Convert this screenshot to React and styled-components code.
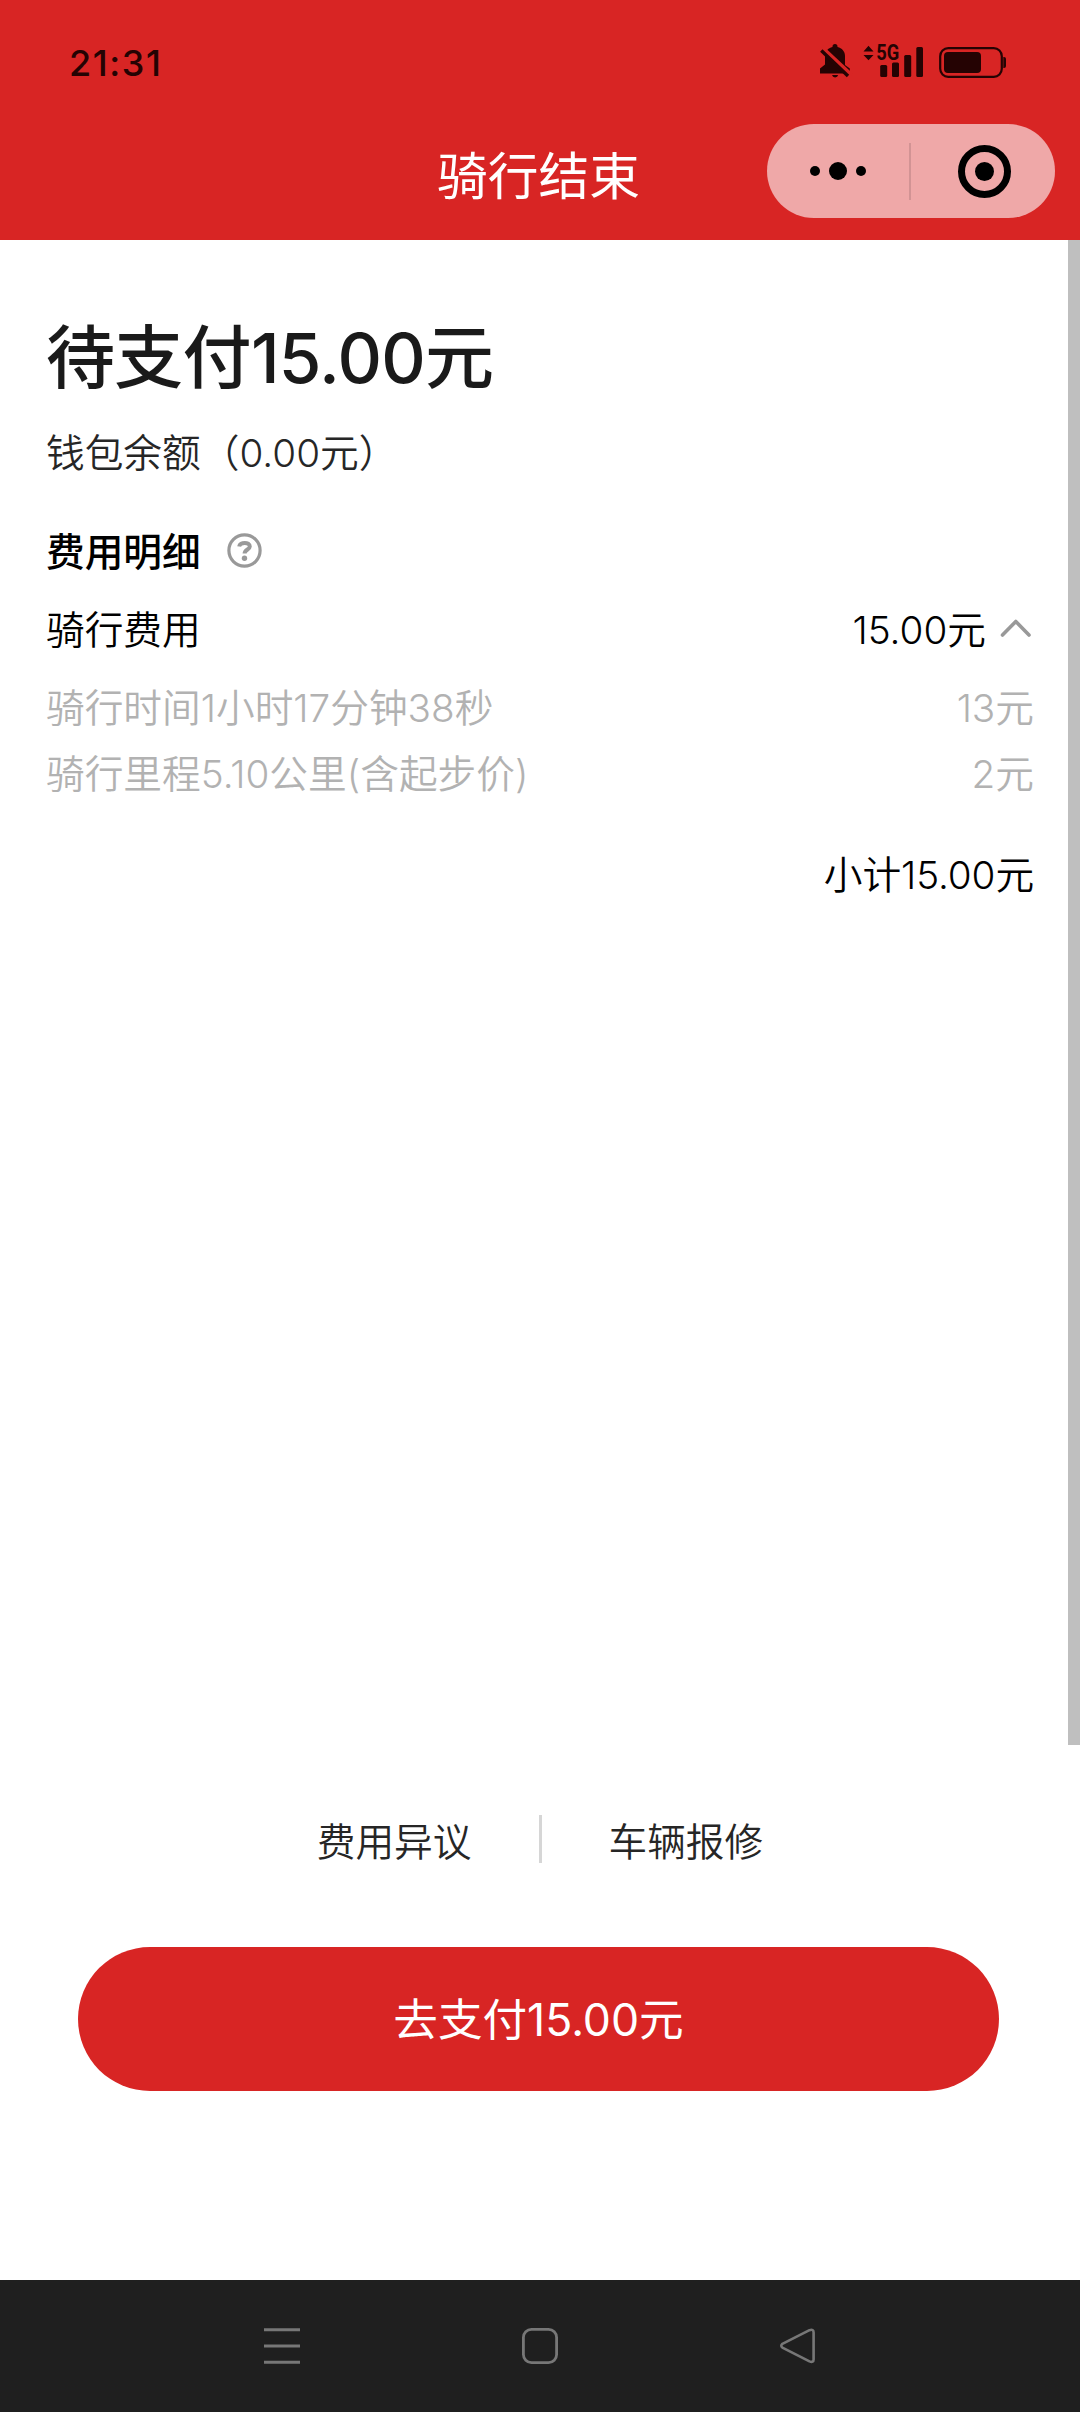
import React, { useState } from 'react';
import styled, { createGlobalStyle } from 'styled-components';

const GlobalStyle = createGlobalStyle`
  * {
    box-sizing: border-box;
  }

  body {
    margin: 0;
    background: #ffffff;
    font-family: Inter, "Noto Sans CJK SC", sans-serif;
    -webkit-font-smoothing: antialiased;
  }
`;

const Screen = styled.div`
  width: 1080px;
  height: 2412px;
  display: flex;
  flex-direction: column;
  overflow: hidden;
  background: #ffffff;
`;

const Header = styled.header`
  height: 240px;
  background: #d82524;
  display: flex;
  flex-direction: column;
`;

const StatusBar = styled.div`
  height: 124px;
  padding: 0 65px 0 69px;
  display: flex;
  justify-content: space-between;
  align-items: flex-start;
  color: #250303;
`;

const Clock = styled.span`
  margin-top: 43px;
  font-size: 36px;
  line-height: 40px;
  font-weight: 500;
  letter-spacing: 1.6px;
`;

const StatusIcons = styled.svg`
  display: block;
  width: 195px;
  height: 50px;
  margin-top: 32px;
  overflow: visible;
`;

const NavBar = styled.div`
  height: 94px;
  padding-right: 25px;
  display: grid;
  grid-template-columns: 1fr auto 1fr;
  align-items: center;
`;

const PageTitle = styled.h1`
  grid-column: 2;
  margin: 11px 0 0 22px;
  font-size: 50.7px;
  line-height: 60px;
  font-weight: 400;
  color: #ffffff;
`;

const Capsule = styled.div`
  grid-column: 3;
  justify-self: end;
  width: 288px;
  height: 94px;
  border-radius: 47px;
  background: #efa8a8;
  display: flex;
  align-items: center;
`;

const CapsuleButton = styled.button`
  flex: ${props => props.$grow};
  height: 100%;
  padding: ${props => props.$padding || '0'};
  border: none;
  background: none;
  display: flex;
  justify-content: center;
  align-items: center;

  svg {
    display: block;
  }
`;

const CapsuleDivider = styled.div`
  width: 2px;
  height: 57px;
  background: #d29394;
`;

const Body = styled.main`
  height: 1505px;
  display: flex;
`;

const Content = styled.div`
  flex: 1;
  padding: 73px 34px 0 46px;
`;

const ScrollBar = styled.div`
  width: 12px;
  background: #bfbfbf;
`;

const AmountDue = styled.h2`
  margin: 0;
  font-size: 69px;
  line-height: 90px;
  font-weight: 500;
  letter-spacing: -0.7px;
  color: #1a1a1a;
`;

const Balance = styled.p`
  margin: 25px 0 0;
  font-size: 38.7px;
  line-height: 50px;
  font-weight: 350;
  color: #262626;
`;

const SectionTitle = styled.div`
  margin-top: 49px;
  height: 50px;
  display: flex;
  align-items: center;
  gap: 26px;
  font-size: 38.7px;
  line-height: 50px;
  font-weight: 500;
  color: #000000;

  svg {
    display: block;
    margin-top: -3px;
  }
`;

const FeeRow = styled.div`
  margin-top: ${props => props.$top}px;
  height: 50px;
  display: flex;
  justify-content: space-between;
  align-items: center;
  font-size: 38.7px;
  line-height: 50px;
  font-weight: 350;
  color: ${props => (props.$muted ? '#b2b2b2' : '#000000')};
`;

const FeeAmount = styled.span`
  display: flex;
  align-items: center;
  gap: 13px;

  svg {
    display: block;
    margin: -4px 2px 0 0;
  }
`;

const Subtotal = styled.div`
  margin-top: 51px;
  text-align: right;
  font-size: 38.7px;
  line-height: 50px;
  font-weight: 350;
  letter-spacing: -0.1px;
  color: #000000;
`;

const Footer = styled.footer`
  flex: 1;
  padding-top: 70px;
  display: flex;
  flex-direction: column;
`;

const Links = styled.div`
  height: 48px;
  display: grid;
  grid-template-columns: 1fr 3px 1fr;
  grid-template-rows: 48px;
  align-items: start;
  gap: 67px;
`;

const LinkText = styled.a`
  justify-self: ${props => props.$side};
  margin-top: 3px;
  font-size: 38.7px;
  line-height: 48px;
  font-weight: 350;
  color: #262626;
`;

const LinkDivider = styled.div`
  height: 48px;
  background: #d6d6d6;
`;

const PayButton = styled.button`
  width: 921px;
  height: 144px;
  margin: 84px 0 0 78px;
  padding: 2px 0 0;
  border: none;
  border-radius: 72px;
  background: #d82524;
  color: #ffffff;
  font-family: inherit;
  font-size: 44.6px;
  line-height: 60px;
  font-weight: 370;
`;

const SystemNav = styled.nav`
  height: 132px;
  padding: 0 264px;
  background: #1f1f1f;
  display: flex;
  justify-content: space-between;
  align-items: center;

  svg {
    display: block;
  }
`;

const details = [
  { label: '骑行时间1小时17分钟38秒', value: '13元' },
  { label: '骑行里程5.10公里(含起步价)', value: '2元' },
];

function StatusGlyphs() {
  return (
    <StatusIcons viewBox="0 -10 195 50" fill="currentColor">
      {/* muted bell */}
      <path d="M12.5 5 V4.6 A2.5 2.5 0 0 1 17.5 4.6 V5 C22 6 25 9.5 25 14 V23 L29.8 26.5 V31.5 H0 V26.5 L5 22.5 V14 C5 9.5 8 6 12.5 5 Z" />
      <path d="M12 33 H18.2 A3.2 3.2 0 0 1 12 33 Z" />
      <path d="M1.5 5.5 L31.5 33.5" stroke="#d82524" strokeWidth="4.5" />
      <path d="M1.3 8.5 L28 34" stroke="currentColor" strokeWidth="3.4" />
      {/* data arrows */}
      <path d="M43.5 9.5 L48.5 3.8 L53.5 9.5 Z M43.5 13 L48.5 18.2 L53.5 13 Z" />
      <text x="56.2" y="18.4" fontFamily="Roboto, sans-serif" fontWeight="700" fontSize="21.5" textLength="23" lengthAdjust="spacingAndGlyphs">5G</text>
      {/* signal */}
      <rect x="60.2" y="23" width="7" height="12" rx="1.5" />
      <rect x="72" y="20.5" width="7" height="14.5" rx="1.5" />
      <rect x="84.2" y="13" width="7" height="22" rx="1.5" />
      <rect x="96.3" y="5" width="6.7" height="30" rx="1.5" />
      {/* battery */}
      <rect x="120.2" y="6.2" width="61.6" height="28.6" rx="8" fill="none" stroke="currentColor" strokeWidth="2.2" />
      <rect x="124" y="10" width="37" height="21" rx="4" />
      <path d="M183.3 15 H184 A2 2 0 0 1 186 17 V24 A2 2 0 0 1 184 26 H183.3 Z" />
    </StatusIcons>
  );
}

function HelpIcon() {
  return (
    <svg width="35" height="35" viewBox="0 0 35 35" fill="none" stroke="#999999">
      <circle cx="17.5" cy="17.5" r="15.6" strokeWidth="3.2" />
      <path d="M12.2 13.4 C12.8 8.8 22.8 8.6 22.8 13.5 C22.8 16.5 17.6 16.6 17.6 20.6" strokeWidth="4" />
      <circle cx="17.5" cy="25.3" r="2.7" fill="#999999" stroke="none" />
    </svg>
  );
}

function ChevronIcon({ open }) {
  return (
    <svg width="33" height="20" viewBox="0 0 33 20" fill="none" stroke="#999999" strokeWidth="3.6" strokeLinecap="round" strokeLinejoin="round">
      <path d={open ? 'M3.5 17 L16.8 3.5 L30 17' : 'M3.5 3.5 L16.8 17 L30 3.5'} />
    </svg>
  );
}

export default function App() {
  const [open, setOpen] = useState(true);

  return (
    <Screen>
      <GlobalStyle />
      <Header>
        <StatusBar>
          <Clock>21:31</Clock>
          <StatusGlyphs />
        </StatusBar>
        <NavBar>
          <PageTitle>骑行结束</PageTitle>
          <Capsule>
            <CapsuleButton $grow={143}>
              <svg width="56" height="18" viewBox="0 0 56 18">
                <circle cx="5" cy="9" r="5" />
                <circle cx="28" cy="9" r="9" />
                <circle cx="51" cy="9" r="5" />
              </svg>
            </CapsuleButton>
            <CapsuleDivider />
            <CapsuleButton $grow={142} $padding="1px 0 0 4px">
              <svg width="53" height="53" viewBox="0 0 53 53">
                <circle cx="26.5" cy="26.5" r="23" fill="none" stroke="#000000" strokeWidth="7" />
                <circle cx="26.5" cy="26.5" r="9.5" />
              </svg>
            </CapsuleButton>
          </Capsule>
        </NavBar>
      </Header>

      <Body>
        <Content>
          <AmountDue>待支付15.00元</AmountDue>
          <Balance>钱包余额（0.00元）</Balance>
          <SectionTitle>
            费用明细
            <HelpIcon />
          </SectionTitle>
          <FeeRow $top={28} onClick={() => setOpen(!open)}>
            <span>骑行费用</span>
            <FeeAmount>
              15.00元
              <ChevronIcon open={open} />
            </FeeAmount>
          </FeeRow>
          {open && details.map((item, i) => (
            <FeeRow key={item.label} $muted $top={i === 0 ? 28 : 16}>
              <span>{item.label}</span>
              <span>{item.value}</span>
            </FeeRow>
          ))}
          <Subtotal>小计15.00元</Subtotal>
        </Content>
        <ScrollBar />
      </Body>

      <Footer>
        <Links>
          <LinkText $side="end">费用异议</LinkText>
          <LinkDivider />
          <LinkText $side="start">车辆报修</LinkText>
        </Links>
        <PayButton>去支付15.00元</PayButton>
      </Footer>

      <SystemNav>
        <svg width="36" height="36" viewBox="0 0 36 36" stroke="#777777" strokeWidth="3">
          <path d="M0 1.7 H36 M0 18 H36 M0 34.3 H36" />
        </svg>
        <svg width="36" height="36" viewBox="0 0 36 36" fill="none" stroke="#777777" strokeWidth="2.8">
          <rect x="1.4" y="1.4" width="33.2" height="33.2" rx="8" />
        </svg>
        <svg width="36" height="36" viewBox="0 0 36 36" fill="none" stroke="#777777" strokeWidth="2.6" strokeLinejoin="round">
          <path d="M2.4 15.8 L29.5 2.2 Q33.6 0.8 33.6 4.4 V31.4 Q33.6 35 29.5 33.4 L2.4 19.6 Q0.2 17.7 2.4 15.8 Z" />
        </svg>
      </SystemNav>
    </Screen>
  );
}
